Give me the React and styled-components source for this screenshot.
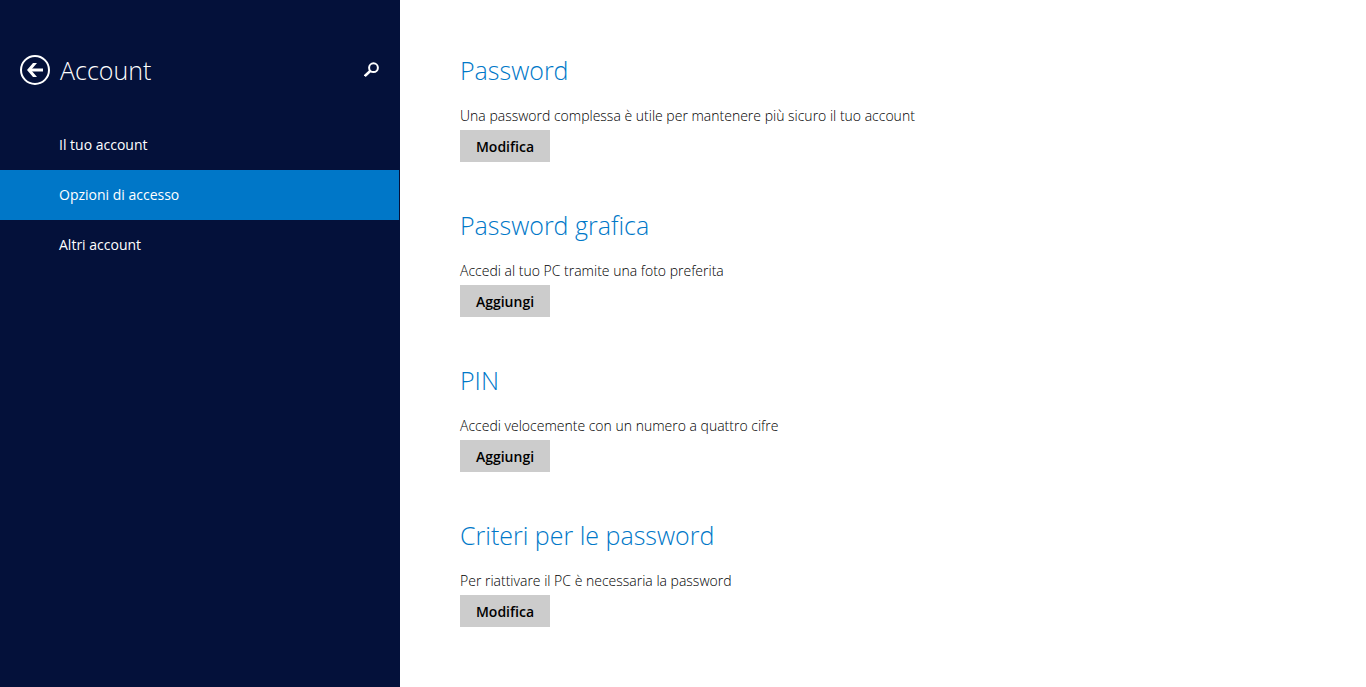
import React from 'react';
import styled, { createGlobalStyle } from 'styled-components';

const Colors = {
    navy: '#04113a',
    blue: '#0077c8',
    heading: '#0078c8',
    grey: '#cccccc'
};

const GlobalStyle = createGlobalStyle`
    * {
        box-sizing: border-box;
    }
    body {
        margin: 0;
        background: #fff;
        color: #000;
        font-family: "Open Sans", "Noto Sans", sans-serif;
        font-size: 14px;
    }
`;

const Page = styled.div`
    display: flex;
    min-height: 100vh;
`;

const Sidebar = styled.aside`
    flex: 0 0 400px;
    background: ${Colors.navy};
    color: #fff;
`;

const SidebarHeader = styled.header`
    display: flex;
    align-items: center;
    gap: 10px;
    height: 120px;
    padding: 20px 20px 0;
`;

const IconButton = styled.button`
    display: flex;
    padding: 0;
    border: 0;
    background: none;
    color: inherit;
    cursor: pointer;
`;

const Title = styled.h1`
    flex: 1;
    margin: 0;
    font-size: 25px;
    font-weight: 300;
    line-height: 36px;
`;

const NavLink = styled.a`
    display: block;
    padding: 0 59px;
    margin-right: 1px;
    line-height: 50px;
    color: #fff;
    text-decoration: none;
    background: ${props => props.$selected ? Colors.blue : 'transparent'};
`;

const Content = styled.main`
    flex: 1;
    padding: 52px 60px 0;
`;

const Section = styled.section`
    padding-bottom: 45px;
`;

const SectionTitle = styled.h2`
    margin: 0 0 18px;
    color: ${Colors.heading};
    font-size: 25px;
    font-weight: 300;
    line-height: 36px;
`;

const Description = styled.p`
    margin: 0 0 4px;
    font-weight: 300;
    line-height: 20px;
`;

const ActionButton = styled.button`
    display: block;
    min-width: 90px;
    height: 32px;
    padding: 0 12px;
    border: 0;
    background: ${Colors.grey};
    color: #000;
    font: inherit;
    font-weight: 600;
    cursor: pointer;
`;

const navItems = ['Il tuo account', 'Opzioni di accesso', 'Altri account'];

const sections = [
    {
        title: 'Password',
        text: 'Una password complessa è utile per mantenere più sicuro il tuo account',
        action: 'Modifica'
    },
    {
        title: 'Password grafica',
        text: 'Accedi al tuo PC tramite una foto preferita',
        action: 'Aggiungi'
    },
    {
        title: 'PIN',
        text: 'Accedi velocemente con un numero a quattro cifre',
        action: 'Aggiungi'
    },
    {
        title: 'Criteri per le password',
        text: 'Per riattivare il PC è necessaria la password',
        action: 'Modifica'
    }
];

function BackIcon() {
    return (
        <svg width="30" height="30" viewBox="0 0 30 30" fill="none" stroke="currentColor">
            <circle cx="15" cy="15" r="14" strokeWidth="2" />
            <path d="M9 15h14" strokeWidth="3" />
            <path d="M7 15l6-7h4l-6 7 6 7h-4z" fill="currentColor" stroke="none" />
        </svg>
    );
}

function SearchIcon() {
    return (
        <svg width="16" height="16" viewBox="0 0 16 16" fill="none" stroke="currentColor">
            <circle cx="9.5" cy="5.7" r="4.4" strokeWidth="2" />
            <path d="M6.5 8.7L0.8 14" strokeWidth="2.6" />
        </svg>
    );
}

function App() {
    return (
        <Page>
            <GlobalStyle />
            <Sidebar>
                <SidebarHeader>
                    <IconButton aria-label="Indietro"><BackIcon /></IconButton>
                    <Title>Account</Title>
                    <IconButton aria-label="Cerca"><SearchIcon /></IconButton>
                </SidebarHeader>
                <nav>
                    {navItems.map((item, i) => (
                        <NavLink key={item} href="#" $selected={i === 1}>{item}</NavLink>
                    ))}
                </nav>
            </Sidebar>
            <Content>
                {sections.map(section => (
                    <Section key={section.title}>
                        <SectionTitle>{section.title}</SectionTitle>
                        <Description>{section.text}</Description>
                        <ActionButton>{section.action}</ActionButton>
                    </Section>
                ))}
            </Content>
        </Page>
    );
}

export default App;
